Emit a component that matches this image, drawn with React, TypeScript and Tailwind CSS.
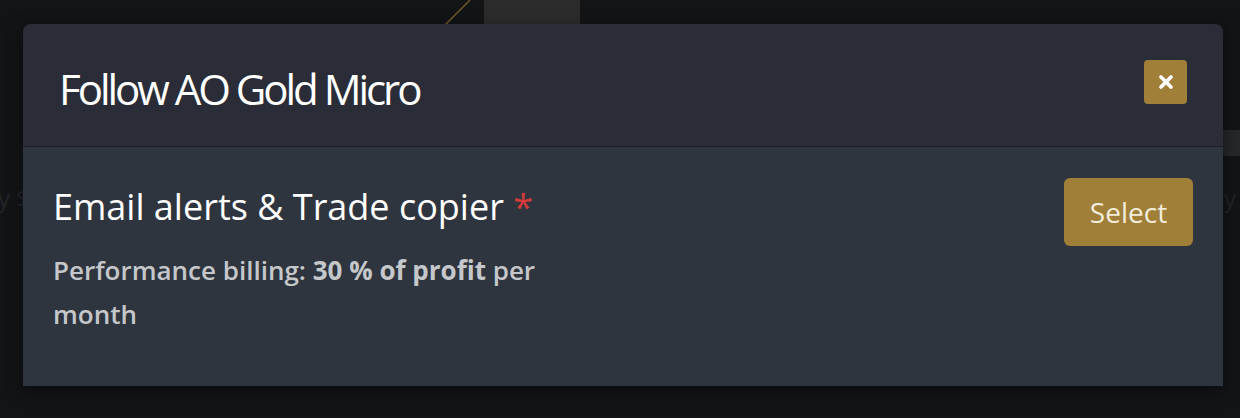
import { X } from 'lucide-react';

export default function App() {
  return (
    <div
      className="relative h-[418px] w-[1240px] overflow-hidden bg-[#131416]"
      style={{ fontFamily: '"Open Sans", "Noto Sans", sans-serif' }}
    >
      {/* background page behind the overlay */}
      <div className="absolute left-[484px] top-0 h-[24px] w-[96px] bg-[#2c2c2d]" />
      <svg className="absolute left-[440px] top-0" width="40" height="26" viewBox="0 0 40 26">
        <line x1="4" y1="26" x2="30" y2="0" stroke="#6b5a2a" strokeWidth="1.5" />
      </svg>
      <div className="absolute left-[1222px] top-[130px] h-[26px] w-[18px] bg-[#262729]" />
      <div className="absolute left-[-2px] top-[180px] text-[24px] text-[#22242a]">y $</div>
      <div className="absolute left-[1224px] top-[180px] text-[24px] text-[#22242a]">y</div>

      {/* modal */}
      <div className="relative ml-[23px] mt-[24px] w-[1200px] overflow-hidden rounded-t-[8px] shadow-[0_4px_16px_rgba(0,0,0,0.5)]">
        <div className="flex h-[122px] items-start justify-between bg-[#2a2d37] pl-[36px] pr-[36px] pt-[36px]">
          <h1 className="mt-[8px] text-[42px] leading-[42px] tracking-[-0.072em] text-white">
            Follow AO Gold Micro
          </h1>
          <button className="flex h-[44px] w-[43px] items-center justify-center rounded-[4px] bg-[#a07f39]">
            <X size={20} strokeWidth={4.5} className="text-white" />
          </button>
        </div>
        <div className="h-px bg-[#1c1f25]" />
        <div className="flex h-[239px] items-start justify-between bg-[#2f353e] pl-[30px] pr-[30px] pt-[31px]">
          <div className="mt-[7px] w-[520px]">
            <div className="text-[36px] leading-[44px] text-white">
              Email alerts &amp; Trade copier <span className="text-[#d63b3b]">*</span>
            </div>
            <p className="mt-[19px] text-[26px] font-semibold leading-[44px] text-[#c5c7cb]">
              Performance billing: <span className="font-bold">30 % of profit</span> per month
            </p>
          </div>
          <button className="h-[68px] w-[129px] rounded-[6px] bg-[#a07f39] text-[28px] text-[#f2ecdc]">
            Select
          </button>
        </div>
      </div>
    </div>
  );
}
